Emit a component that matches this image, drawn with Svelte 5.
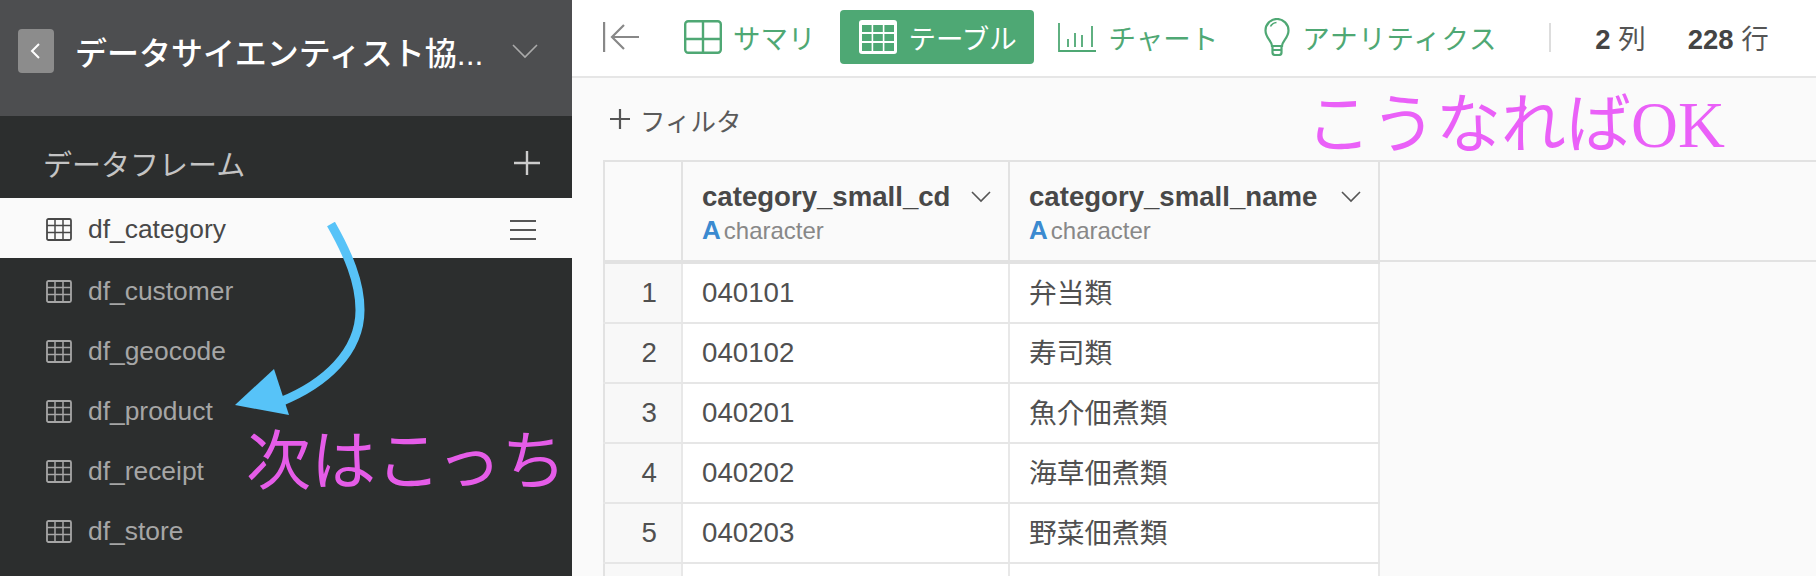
<script>
	const datasets = ['df_category', 'df_customer', 'df_geocode', 'df_product', 'df_receipt', 'df_store'];
	const rows = [
		{ n: 1, cd: '040101', name: '弁当類' },
		{ n: 2, cd: '040102', name: '寿司類' },
		{ n: 3, cd: '040201', name: '魚介佃煮類' },
		{ n: 4, cd: '040202', name: '海草佃煮類' },
		{ n: 5, cd: '040203', name: '野菜佃煮類' },
		{ n: '', cd: '', name: '' }
	];
	const columns = [
		{ title: 'category_small_cd', cls: 'col-cd' },
		{ title: 'category_small_name', cls: 'col-name' }
	];
</script>

<div class="page">
	<aside class="sidebar">
		<header class="project">
			<button class="back" aria-label="戻る">
				<svg width="14" height="18" viewBox="0 0 14 18"><path d="M10 2 3 9l7 7" fill="none" stroke="#fff" stroke-width="2" /></svg>
			</button>
			<h1>データサイエンティスト協...</h1>
			<svg class="caret" width="26" height="15" viewBox="0 0 26 15"><path d="M1 1l12 12L25 1" fill="none" stroke="#aaa" stroke-width="1.6" /></svg>
		</header>
		<div class="section">
			<span>データフレーム</span>
			<svg width="26" height="24" viewBox="0 0 26 24"><path d="M13 0v24M0 12h26" stroke="#ccc" stroke-width="2.4" /></svg>
		</div>
		<ul class="list">
			{#each datasets as name, i}
				<li class:active={i === 0}>
					<svg class="grid-icon" width="26" height="23" viewBox="0 0 26 23">
						<rect x="1" y="1" width="24" height="21" rx="1.5" fill="none" stroke="currentColor" stroke-width="1.8" />
						<path d="M9 1v21M17 1v21M1 7.500h24M1 14.500h24" stroke="currentColor" stroke-width="1.5" />
					</svg>
					<span class="ds-name">{name}</span>
					{#if i === 0}
						<svg class="menu" width="26" height="22" viewBox="0 0 26 22"><path d="M0 2h26M0 11h26M0 20h26" stroke="#555" stroke-width="2" /></svg>
					{/if}
				</li>
			{/each}
		</ul>
	</aside>

	<main class="main">
		<nav class="toolbar">
			<svg class="collapse" width="36" height="30" viewBox="0 0 36 30">
				<path d="M1 0v30" stroke="#888" stroke-width="2.4" />
				<path d="M21 3 9 15l12 12M9 15h27" fill="none" stroke="#888" stroke-width="2.2" />
			</svg>
			<span class="tab tab-summary">
				<svg width="38" height="34" viewBox="0 0 38 34">
					<rect x="1.2" y="1.2" width="35.6" height="31.600" rx="3" fill="none" stroke="#4fa874" stroke-width="2.4" />
					<path d="M19 1v32M1 19h36" stroke="#4fa874" stroke-width="2.4" />
				</svg>
				サマリ
			</span>
			<span class="tab tab-active">
				<svg width="38" height="34" viewBox="0 0 38 34">
					<rect width="38" height="34" rx="3" fill="#fff" />
					<g fill="#4ea874">
						<rect x="3" y="5" width="9.6" height="7" /><rect x="14.2" y="5" width="9.6" height="7" /><rect x="25.4" y="5" width="9.6" height="7" />
						<rect x="3" y="14" width="9.6" height="7" /><rect x="14.2" y="14" width="9.6" height="7" /><rect x="25.4" y="14" width="9.6" height="7" />
						<rect x="3" y="23" width="9.6" height="8" /><rect x="14.2" y="23" width="9.6" height="8" /><rect x="25.4" y="23" width="9.6" height="8" />
					</g>
				</svg>
				テーブル
			</span>
			<span class="tab tab-chart">
				<svg width="38" height="29" viewBox="0 0 38 29">
					<path d="M1 0v28h37" fill="none" stroke="#4fa874" stroke-width="1.8" />
					<path d="M10 16v8M17 10v14M24 12v12M34 3v21" stroke="#4fa874" stroke-width="1.8" />
				</svg>
				チャート
			</span>
			<span class="tab tab-analytics">
				<svg width="26" height="38" viewBox="0 0 26 38">
					<path d="M8 28c0-5-6.500-8-6.500-15.500a11.500 11.500 0 0 1 23 0C24.500 20 18 23 18 28z" fill="none" stroke="#4fa874" stroke-width="2.2" />
					<path d="M6.500 8.500a7.500 7.500 0 0 1 6-4" fill="none" stroke="#4fa874" stroke-width="1.6" />
					<path d="M8.500 28v6.500q0 2.500 2.500 2.500h4q2.500 0 2.500-2.500V28M8.500 32h9" fill="none" stroke="#4fa874" stroke-width="2.2" />
				</svg>
				アナリティクス
			</span>
			<span class="divider"></span>
			<span class="count count-cols"><b>2</b> 列</span>
			<span class="count"><b>228</b> 行</span>
		</nav>

		<div class="filter">
			<svg width="20" height="20" viewBox="0 0 20 20"><path d="M10 0v20M0 10h20" stroke="#555" stroke-width="2.2" /></svg>
			<span>フィルタ</span>
		</div>

		<div class="thead">
			<div class="cell idx"></div>
			{#each columns as col}
				<div class="cell {col.cls} head">
					<div class="head-top">
						<span class="col-title">{col.title}</span>
						<svg width="20" height="12" viewBox="0 0 20 12"><path d="M1 1l9 9 9-9" fill="none" stroke="#555" stroke-width="1.6" /></svg>
					</div>
					<div class="col-type"><span class="type-a">A</span>character</div>
				</div>
			{/each}
		</div>
		<div class="tbody">
			{#each rows as row}
				<div class="row">
					<div class="cell idx">{row.n}</div>
					<div class="cell col-cd">{row.cd}</div>
					<div class="cell col-name">{row.name}</div>
				</div>
			{/each}
		</div>
	</main>

	<!-- annotations pasted over the screenshot -->
	<svg class="arrow" width="400" height="220" viewBox="0 0 400 220">
		<path d="M101 2C118 32 130 60 130 88 130 130 95 162 50 180" fill="none" stroke="#57c3f8" stroke-width="9" />
		<path d="M5 183 44 147 59 193z" fill="#57c3f8" />
	</svg>
	<span class="note note-ok">こうなればOK</span>
	<span class="note note-next">次はこっち</span>
</div>

<style>
	:global(body) {
		margin: 0;
		background: #fafafa;
	}

	.page {
		position: relative;
		display: flex;
		width: 1816px;
		height: 576px;
		overflow: hidden;
		font-family: 'Liberation Sans', 'Noto Sans CJK JP', sans-serif;
		color: #444;
	}

	.sidebar {
		width: 572px;
		flex: none;
		background: #2c2e2e;
		display: flex;
		flex-direction: column;
	}

	.project {
		height: 116px;
		box-sizing: border-box;
		background: #4d4e50;
		display: flex;
		align-items: center;
		padding: 0 34px 14px 18px;
	}

	.back {
		width: 36px;
		height: 44px;
		flex: none;
		padding: 0;
		border: 0;
		border-radius: 4px;
		background: #8c8c8c;
		display: flex;
		align-items: center;
		justify-content: center;
	}

	.project h1 {
		margin: 0 20px 0 21px;
		flex: 1;
		min-width: 0;
		font-size: 32px;
		font-weight: 500;
		color: #fff;
		white-space: nowrap;
	}

	.caret {
		flex: none;
	}

	.section {
		height: 82px;
		box-sizing: border-box;
		padding: 12px 32px 0 43px;
		display: flex;
		align-items: center;
		justify-content: space-between;
		font-size: 29px;
		color: #c4c4c4;
	}

	.list {
		margin: 0;
		padding: 0;
		list-style: none;
	}

	.list li {
		height: 60px;
		box-sizing: border-box;
		display: flex;
		align-items: center;
		padding: 7px 36px 0 46px;
		font-size: 26.400px;
		color: #a6a6a6;
	}

	.list li.active {
		padding-top: 3px;
		background: #fafafa;
		color: #484848;
	}

	.grid-icon {
		flex: none;
		margin-right: 16px;
	}

	.ds-name {
		flex: 1;
	}

	.main {
		flex: 1;
		min-width: 0;
		background: #fafafa;
	}

	.toolbar {
		box-sizing: border-box;
		padding: 0 0 2px 31px;
		height: 78px;
		background: #fff;
		border-bottom: 2px solid #e6e6e6;
		display: flex;
		align-items: center;
		font-size: 27.500px;
		color: #4fa874;
	}

	.collapse {
		flex: none;
		margin-right: 45px;
	}

	.tab {
		display: flex;
		align-items: center;
		gap: 11px;
		white-space: nowrap;
	}

	.tab svg {
		flex: none;
	}

	.tab-summary {
		margin-right: 24px;
	}

	.tab-active {
		width: 194px;
		height: 54px;
		box-sizing: border-box;
		padding-left: 19px;
		gap: 12px;
		border-radius: 4px;
		background: #4ea874;
		color: #fff;
		margin-right: 24px;
	}

	.tab-chart {
		gap: 13px;
		margin-right: 46px;
	}

	.tab-analytics {
		gap: 12px;
		letter-spacing: 0.800px;
	}

	.divider {
		width: 2px;
		height: 29px;
		background: #ddd;
		margin: 0 44px 0 52px;
	}

	.count {
		color: #555;
		white-space: nowrap;
	}

	.count b {
		color: #444;
		font-weight: 700;
	}

	.count-cols {
		margin-right: 42px;
	}

	.filter {
		height: 82px;
		display: flex;
		align-items: center;
		gap: 10px;
		padding-left: 38px;
		font-size: 25.500px;
		color: #5a5a5a;
	}

	.thead {
		display: flex;
		height: 98px;
		border-top: 2px solid #e2e2e2;
		border-bottom: 2px solid #e2e2e2;
		margin-left: 31px;
	}

	.cell {
		box-sizing: border-box;
		border-right: 2px solid #e8e8e8;
		display: flex;
		align-items: center;
		padding: 0 0 0 19px;
		font-size: 27.700px;
		color: #505050;
	}

	.idx {
		width: 80px;
		flex: none;
		border-left: 2px solid #e2e2e2;
		justify-content: flex-end;
		padding: 0 24px 0 0;
		background: #f8f8f8;
	}

	.col-cd {
		width: 327px;
		flex: none;
	}

	.col-name {
		width: 370px;
		flex: none;
	}

	.row .col-name {
		padding-bottom: 4px;
	}

	.head {
		flex-direction: column;
		align-items: stretch;
		justify-content: center;
		gap: 2px;
		padding: 5px 17px 0 19px;
	}

	.thead .cell {
		border-right-color: #e2e2e2;
		background: #fafafa;
	}

	.head-top {
		display: flex;
		align-items: center;
		justify-content: space-between;
	}

	.col-title {
		font-size: 27.600px;
		font-weight: 700;
		color: #484848;
		white-space: nowrap;
	}

	.col-type {
		font-size: 24px;
		color: #888;
		display: flex;
		align-items: baseline;
	}

	.type-a {
		font-size: 26px;
		font-weight: 700;
		color: #3b8ad0;
		margin-right: 3px;
	}

	.tbody {
		width: 777px;
		margin-left: 31px;
		border-top: 2px solid #e2e2e2;
	}

	.row {
		display: flex;
		height: 58px;
		background: #fff;
		border-bottom: 2px solid #e6e6e6;
	}

	.note {
		position: absolute;
		font-family: 'Liberation Serif', 'Noto Sans CJK JP', serif;
		font-size: 65px;
		line-height: 1;
		white-space: nowrap;
		color: #ea60f8;
	}

	.note-ok {
		left: 1306px;
		top: 93px;
	}

	.note-next {
		left: 246px;
		top: 430px;
		color: #e55ce8;
	}

	.arrow {
		position: absolute;
		left: 230px;
		top: 222px;
	}
</style>
